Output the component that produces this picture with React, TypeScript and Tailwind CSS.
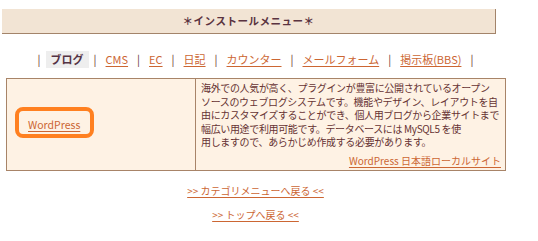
export default function App() {
  const font = { fontFamily: '"Noto Sans CJK JP", "Noto Sans", sans-serif' };
  const sep = <span className="text-[#663333] px-[4px]">|</span>;
  const navLink = "text-[#cc6633] underline underline-offset-2 mx-[5px]";

  return (
    <div className="w-[511px] bg-white pt-[9px] pb-[10px] text-[10px]" style={font}>
      {/* header */}
      <div className="ml-[2px] w-[494px] h-[25px] bg-[#f2e4d4] border-r border-b border-[#a3846a] flex items-center justify-center">
        <span className="font-semibold text-[10.5px] text-[#5a3340] tracking-[0.5px]">＊インストールメニュー＊</span>
      </div>

      {/* nav */}
      <div className="mt-[17px] flex items-center justify-center text-[11px] leading-[17px]">
        {sep}
        <span className="bg-[#eeeeee] font-bold text-[#553344] px-[5px] mx-[1px]">ブログ</span>
        {sep}
        <a className={navLink}>CMS</a>
        {sep}
        <a className={navLink}>EC</a>
        {sep}
        <a className={navLink}>日記</a>
        {sep}
        <a className={navLink}>カウンター</a>
        {sep}
        <a className={navLink}>メールフォーム</a>
        {sep}
        <a className={navLink}>掲示板(BBS)</a>
        {sep}
      </div>

      {/* table */}
      <div className="mt-[10px] ml-[6px] w-[500px] h-[93px] flex border border-[#a88468] bg-[#fef2e4]">
        <div className="w-[189px] border-r border-[#a88468] flex items-center pl-[8px]">
          <span className="w-[2px] h-[5px] bg-[#aa5500] mt-[2px]" />
          <div className="relative ml-[11px]">
            <a className="text-[#cc6633] underline underline-offset-2 text-[10.5px]">WordPress</a>
            <div className="absolute -left-[13px] -top-[10px] w-[79px] h-[31px] rounded-[8px] border-[4px] border-[#ff8020]" />
          </div>
        </div>
        <div className="flex-1 pl-[5px] pr-[4px] pt-[2px] flex flex-col text-[#663333] leading-[13.5px] tracking-[-0.35px] whitespace-nowrap">
          <p>
            海外での人気が高く、プラグインが豊富に公開されているオープン<br />
            ソースのウェブログシステムです。機能やデザイン、レイアウトを自<br />
            由にカスタマイズすることができ、個人用ブログから企業サイトまで<br />
            幅広い用途で利用可能です。データベースには MySQL5 を使<br />
            用しますので、あらかじめ作成する必要があります。
          </p>
          <a className="mt-auto mb-[3px] self-end text-[#cc6633] underline underline-offset-2 tracking-normal">
            WordPress 日本語ローカルサイト
          </a>
        </div>
      </div>

      {/* back links */}
      <div className="mt-[12px] flex flex-col items-center gap-[9px] text-[10px] leading-[15px]">
        <a className="text-[#cc6633] underline underline-offset-2">&gt;&gt; カテゴリメニューへ戻る &lt;&lt;</a>
        <a className="text-[#cc6633] underline underline-offset-2">&gt;&gt; トップへ戻る &lt;&lt;</a>
      </div>
    </div>
  );
}
